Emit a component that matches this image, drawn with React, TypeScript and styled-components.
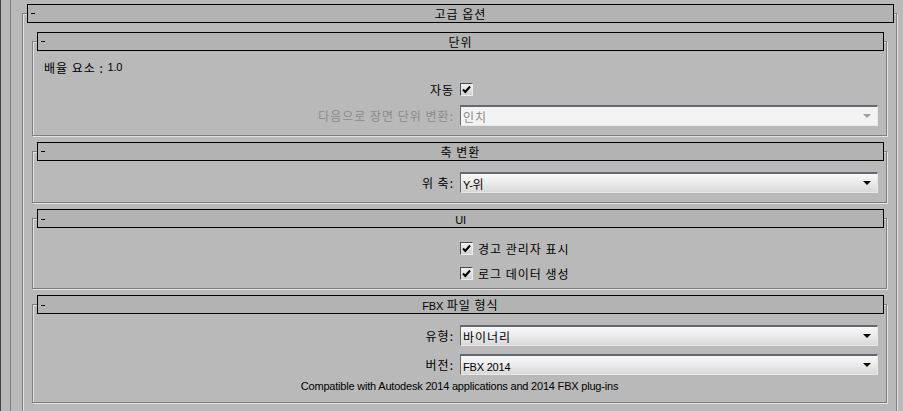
import styled, { createGlobalStyle } from 'styled-components';

const GlobalStyle = createGlobalStyle`
    html, body {
        margin: 0;
        padding: 0;
        background: #b9b9b9;
        overflow: hidden;
    }
    body {
        font-family: "Noto Sans CJK KR", "Liberation Sans", sans-serif;
        font-size: 12px;
        letter-spacing: 1px;
        color: #000;
    }
`;

const Check = () => (
    <svg width="11" height="11" viewBox="0 0 11 11">
        <path d="M2 5.5 L4.3 8 L9 2.5" fill="none" stroke="#000" strokeWidth="2"/>
    </svg>
);

const App = () => {
    return (
        <Window>
            <GlobalStyle/>
            <Rail>
                <Group>
                    <Header>
                        <Dash/>
                        <Title>고급 옵션</Title>
                    </Header>

                    {/* 단위 */}
                    <Group $gap={18}>
                        <Header>
                            <Dash/>
                            <Title>단위</Title>
                        </Header>
                        <Body $top={6} $bottom={9}>
                            <ScaleRow>배율 요소 :&nbsp;<Latin>1.0</Latin></ScaleRow>
                            <FormRow $gap={2} $height={20}>
                                <Label>자동</Label>
                                <CheckLine>
                                    <CheckBox><Check/></CheckBox>
                                </CheckLine>
                            </FormRow>
                            <FormRow $gap={6} $height={21}>
                                <Label $disabled>다음으로 장면 단위 변환:</Label>
                                <Combo $disabled>
                                    <ComboText>인치</ComboText>
                                    <Arrow $disabled/>
                                </Combo>
                            </FormRow>
                        </Body>
                    </Group>

                    {/* 축 변환 */}
                    <Group $gap={15}>
                        <Header>
                            <Dash/>
                            <Title>축 변환</Title>
                        </Header>
                        <Body $top={11} $bottom={9}>
                            <FormRow $height={21}>
                                <Label>위 축:</Label>
                                <Combo>
                                    <ComboText><Latin>Y-</Latin>위</ComboText>
                                    <Arrow/>
                                </Combo>
                            </FormRow>
                        </Body>
                    </Group>

                    {/* UI */}
                    <Group $gap={15}>
                        <Header>
                            <Dash/>
                            <Title><Latin>UI</Latin></Title>
                        </Header>
                        <Body $top={10} $bottom={5}>
                            <FormRow $height={20}>
                                <span/>
                                <CheckLine>
                                    <CheckBox><Check/></CheckBox>
                                    경고 관리자 표시
                                </CheckLine>
                            </FormRow>
                            <FormRow $gap={5} $height={20}>
                                <span/>
                                <CheckLine>
                                    <CheckBox><Check/></CheckBox>
                                    로그 데이터 생성
                                </CheckLine>
                            </FormRow>
                        </Body>
                    </Group>

                    {/* FBX 파일 형식 */}
                    <Group $gap={15}>
                        <Header>
                            <Dash/>
                            <Title><Latin>FBX</Latin> 파일 형식</Title>
                        </Header>
                        <Body $top={11} $bottom={8}>
                            <FormRow $height={21}>
                                <Label>유형:</Label>
                                <Combo>
                                    <ComboText>바이너리</ComboText>
                                    <Arrow/>
                                </Combo>
                            </FormRow>
                            <FormRow $gap={8} $height={21}>
                                <Label>버전:</Label>
                                <Combo>
                                    <ComboText><Latin>FBX 2014</Latin></ComboText>
                                    <Arrow/>
                                </Combo>
                            </FormRow>
                            <Note>Compatible with Autodesk 2014 applications and 2014 FBX plug-ins</Note>
                        </Body>
                    </Group>
                </Group>
            </Rail>
        </Window>
    );
}

export default App;


const Window = styled.div`
    display: flex;
    height: 411px;
    box-sizing: border-box;
    border-left: 1px solid #3d4149;
    padding-left: 9px;
`;

const Rail = styled.div`
    flex: 1;
    min-width: 0;
    border-left: 1px solid #7b7b7b;
    padding: 13px 6px 0 11px;
`;

const Group = styled.div<{ $gap?: number }>`
    margin-top: ${p => p.$gap ?? 0}px;
    border: 1px solid #7e7e7e;
    box-shadow: inset 1px 1px 0 #e4e4e4, 1px 1px 0 #e4e4e4;
    padding: 0 9px 12px;

    & & {
        padding: 0;
    }
`;

const Header = styled.div`
    display: grid;
    grid-template-columns: 1fr auto 1fr;
    align-items: center;
    height: 19px;
    box-sizing: border-box;
    margin: -10px -7px 0 -5px;
    border: 1px solid #000;
    background: #b3b3b3;

    ${Group} ${Group} & {
        margin: -10px 2px 0 4px;
    }
`;

const Dash = styled.span`
    justify-self: start;
    width: 4px;
    height: 1px;
    margin: 0 0 0 3px;
    background: #000;
`;

const Title = styled.span`
    line-height: 17px;
    white-space: nowrap;
`;

const Latin = styled.span`
    font-family: "Liberation Sans", sans-serif;
    font-size: 11px;
    letter-spacing: -0.2px;
`;

const Body = styled.div<{ $top: number, $bottom: number }>`
    display: flex;
    flex-direction: column;
    padding: ${p => p.$top}px 8px ${p => p.$bottom}px 0;
`;

const ScaleRow = styled.div`
    display: flex;
    align-items: center;
    height: 20px;
    padding-left: 11px;
`;

const FormRow = styled.div<{ $gap?: number, $height: number }>`
    display: grid;
    grid-template-columns: 1fr 418px;
    column-gap: 6px;
    align-items: center;
    height: ${p => p.$height}px;
    margin-top: ${p => p.$gap ?? 0}px;
`;

const Label = styled.span<{ $disabled?: boolean }>`
    text-align: right;
    white-space: nowrap;
    color: ${p => p.$disabled ? '#8b8b8b' : '#000'};
`;

const CheckLine = styled.label`
    display: flex;
    align-items: center;
    gap: 5px;
`;

const CheckBox = styled.span`
    display: flex;
    align-items: center;
    justify-content: center;
    width: 13px;
    height: 13px;
    box-sizing: border-box;
    border-top: 1px solid #4e4e4e;
    border-left: 1px solid #4e4e4e;
    border-right: 1px solid #ececec;
    border-bottom: 1px solid #ececec;
    background: linear-gradient(#f0f0f0, #d2d2d2);
`;

const Combo = styled.div<{ $disabled?: boolean }>`
    display: flex;
    align-items: center;
    justify-content: space-between;
    height: 21px;
    box-sizing: border-box;
    border-top: 2px solid #666a70;
    border-left: 1px solid #666a70;
    border-right: 1px solid #e8e8e8;
    border-bottom: 1px solid #e8e8e8;
    padding: 0 6px 0 2px;
    color: ${p => p.$disabled ? '#8b8b8b' : '#000'};
    background: ${p => p.$disabled
        ? '#f3f3f3'
        : 'linear-gradient(#f8f8f8, #ececec 45%, #d9d9d9)'};
`;

const ComboText = styled.span`
    white-space: nowrap;
`;

const Arrow = styled.span<{ $disabled?: boolean }>`
    width: 0;
    height: 0;
    border-left: 4px solid transparent;
    border-right: 4px solid transparent;
    border-top: 4px solid ${p => p.$disabled ? '#a0a0a0' : '#000'};
`;

const Note = styled.div`
    margin: 3px -8px 0 0;
    height: 16px;
    line-height: 16px;
    text-align: center;
    font-family: "Liberation Sans", sans-serif;
    font-size: 11px;
    letter-spacing: -0.2px;
`;
